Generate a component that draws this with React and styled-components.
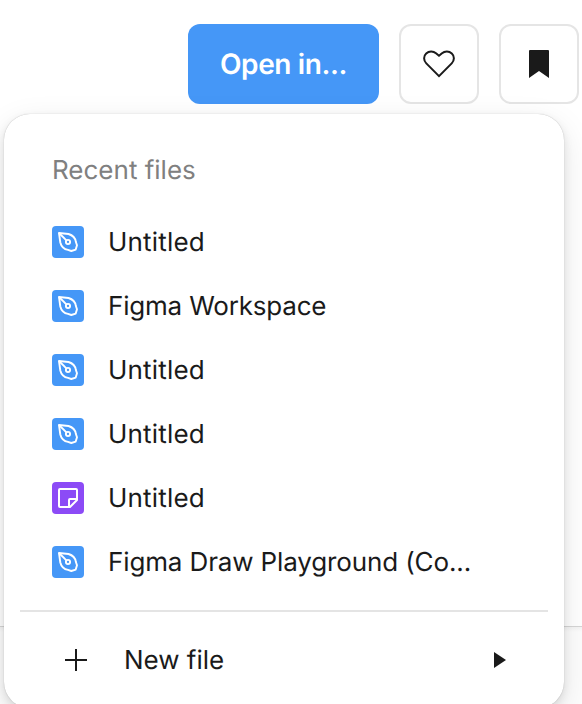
import React from "react";
import styled, { createGlobalStyle } from "styled-components";

const GlobalStyle = createGlobalStyle`
  * { box-sizing: border-box; }
  body { margin: 0; background: #fff; font-family: Inter, "Liberation Sans", sans-serif; text-rendering: geometricPrecision; }
`;

const Page = styled.main`
  position: relative;
  width: 582px;
  height: 704px;
  overflow: hidden;
  background: #fff;
`;

const Toolbar = styled.div`
  display: flex;
  gap: 20px;
  padding: 24px 0 0 188px;
`;

const PrimaryButton = styled.button`
  width: 191px;
  height: 80px;
  flex: none;
  border: 0;
  border-radius: 12px;
  padding: 0;
  background: #4597f7;
  color: #fff;
  font: 600 28px/40px Inter, sans-serif;
  text-rendering: geometricPrecision;
  letter-spacing: -0.4px;
`;

const IconButton = styled.button`
  display: grid;
  place-items: center;
  width: 80px;
  height: 80px;
  flex: none;
  padding: 0;
  border: 2px solid #e5e5e5;
  border-radius: 12px;
  background: #fff;
  color: #1a1a1a;
`;

const Footer = styled.div`
  height: 78px;
  margin-top: 522px;
  background: linear-gradient(#d6d6d6 0 1px, #f4f4f4 1px, #fdfdfd 6px);
`;

const Menu = styled.section`
  position: absolute;
  left: 4px;
  top: 114px;
  width: 560px;
  height: 594px;
  padding-top: 37px;
  border-radius: 26px;
  background: #fff;
  box-shadow: 0 0 1px rgba(0, 0, 0, 0.3), 0 4px 10px rgba(0, 0, 0, 0.1), 0 10px 32px rgba(0, 0, 0, 0.1);
`;

const Heading = styled.h2`
  margin: 0 0 19px;
  padding-left: 48px;
  color: #808080;
  font-size: 26px;
  font-weight: 400;
  line-height: 40px;
`;

const Row = styled.div`
  display: flex;
  align-items: center;
  height: 64px;
  padding: 0 48px;
  gap: 24px;
`;

const Label = styled.span`
  padding-top: 2px;
  color: #1a1a1a;
  font-size: 26px;
  line-height: 40px;
  letter-spacing: ${({ $tracking = 0 }) => $tracking}px;
  white-space: nowrap;
`;

const FileBadge = styled.span`
  display: block;
  width: 32px;
  height: 32px;
  flex: none;
  border-radius: 4px;
  background: ${({ $kind }) => ($kind === "board" ? "#8c4bf6" : "#4597f7")};
  svg { display: block; }
`;

const Divider = styled.hr`
  height: 2px;
  margin: 16px 16px 0;
  border: 0;
  background: #e4e4e4;
`;

const NewFileRow = styled(Row)`
  height: 96px;
  padding: 0 58px 0 60px;
  gap: 0;
  ${Label} { margin-left: 37px; flex: 1; }
  svg { display: block; flex: none; }
`;

const PenIcon = () => (
  <svg width="32" height="32" viewBox="0 0 32 32" fill="none" stroke="#fff" strokeWidth="1.9" strokeLinejoin="round">
    <path d="M7 7 L16.5 8 C20.8 9.3 23.4 12.2 23.9 16 L25 19.2 L23.7 23.6 L19.3 25 L16 23.9 C12.2 23.2 9.3 20.6 8.3 16.5 Z" />
    <path d="M7 7 L14.4 14.4" />
    <circle cx="16" cy="16" r="2.1" />
  </svg>
);

const NoteIcon = () => (
  <svg width="32" height="32" viewBox="0 0 32 32" fill="none" stroke="#fff" strokeWidth="2" strokeLinejoin="round">
    <path d="M8 7 H24 Q25 7 25 8 V18 L18 25 H8 Q7 25 7 24 V8 Q7 7 8 7 Z" />
    <path d="M25 17 H18 Q17 17 17 18 V25" />
  </svg>
);

const HeartIcon = () => (
  <svg width="32" height="28" viewBox="0 0 32 28" fill="none" stroke="currentColor" strokeWidth="2">
    <path d="M16 26.1 L3.3 13.4 C0.4 10.4 0.4 6 3.2 3.4 C6 0.8 10.2 0.8 13 3.2 L16 5.8 L19 3.2 C21.8 0.8 26 0.8 28.8 3.4 C31.6 6 31.6 10.4 28.7 13.4 Z" />
  </svg>
);

const BookmarkIcon = () => (
  <svg width="20" height="28" viewBox="0 0 20 28" fill="currentColor">
    <path d="M1 0 H19 Q20 0 20 1 V28 L10 21 L0 28 V1 Q0 0 1 0 Z" />
  </svg>
);

const files = [
  { name: "Untitled", kind: "design", tracking: 0.2 },
  { name: "Figma Workspace", kind: "design", tracking: -0.19 },
  { name: "Untitled", kind: "design", tracking: 0.2 },
  { name: "Untitled", kind: "design", tracking: 0.2 },
  { name: "Untitled", kind: "board", tracking: 0.2 },
  { name: "Figma Draw Playground (Co...", kind: "design", tracking: -0.13 },
];

export default function App() {
  return (
    <Page>
      <GlobalStyle />
      <Toolbar>
        <PrimaryButton>Open in...</PrimaryButton>
        <IconButton aria-label="Like"><HeartIcon /></IconButton>
        <IconButton aria-label="Save"><BookmarkIcon /></IconButton>
      </Toolbar>
      <Footer />
      <Menu>
        <Heading>Recent files</Heading>
        {files.map((file, i) => (
          <Row key={i}>
            <FileBadge $kind={file.kind}>{file.kind === "board" ? <NoteIcon /> : <PenIcon />}</FileBadge>
            <Label $tracking={file.tracking}>{file.name}</Label>
          </Row>
        ))}
        <Divider />
        <NewFileRow>
          <svg width="23" height="22" viewBox="0 0 23 22" stroke="#1a1a1a" strokeWidth="2">
            <path d="M1 11 H23 M12 0 V22" />
          </svg>
          <Label>New file</Label>
          <svg width="12" height="16" viewBox="0 0 12 16" fill="#1a1a1a">
            <path d="M0 0 L12 8 L0 16 Z" />
          </svg>
        </NewFileRow>
      </Menu>
    </Page>
  );
}
